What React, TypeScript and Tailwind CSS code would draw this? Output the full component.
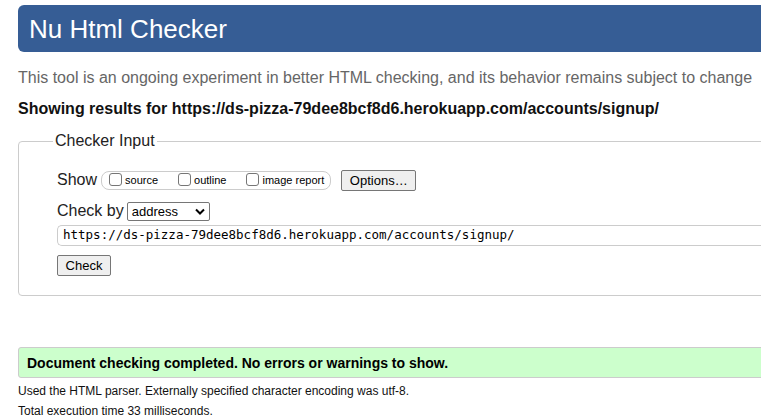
import React from 'react';

const sans = { fontFamily: '"Liberation Sans", Arial, sans-serif' };

export default function App() {
  return (
    <div className="w-[761px] h-[416px] overflow-hidden bg-white text-black" style={sans}>
      <div className="w-[820px] pl-[18px] pt-[5px]">
        <header className="h-[47px] bg-[#365d95] rounded-[6px] flex items-center pl-[11px]">
          <h1 className="text-[26px] leading-none text-white font-normal">Nu Html Checker</h1>
        </header>

        <p className="mt-[17px] text-[16px] leading-[18px] text-[#666666]">
          This tool is an ongoing experiment in better HTML checking, and its behavior remains subject to change
        </p>
        <p className="mt-[13px] text-[16px] leading-[18px] font-bold text-[#111111]">
          Showing results for https://ds-pizza-79dee8bcf8d6.herokuapp.com/accounts/signup/
        </p>

        <fieldset className="mt-[14px] border border-[#cccccc] rounded-[4px] h-[164px] pl-[38px] pr-0 m-0 min-w-0">
          <legend className="-ml-[4px] px-[2px] text-[16px] leading-[18px] text-[#222222]">Checker Input</legend>

          <div className="flex items-center mt-[19px] h-[22px]">
            <span className="text-[16px] leading-[18px] text-[#222222] mr-[4px]">Show</span>
            <div className="flex items-center h-[19px] border border-[#cccccc] rounded-[8px] pl-[7px] pr-[6px]">
              <label className="flex items-center text-[11px] leading-none mr-[20px]">
                <span className="w-[13px] h-[13px] border border-[#767676] rounded-[3px] bg-white mr-[3px] mb-[2px]" />
                source
              </label>
              <label className="flex items-center text-[11px] leading-none mr-[20px]">
                <span className="w-[13px] h-[13px] border border-[#767676] rounded-[3px] bg-white mr-[3px] mb-[2px]" />
                outline
              </label>
              <label className="flex items-center text-[11px] leading-none">
                <span className="w-[13px] h-[13px] border border-[#767676] rounded-[3px] bg-white mr-[3px] mb-[2px]" />
                image report
              </label>
            </div>
            <button className="ml-[10px] h-[21px] w-[75px] border border-[#767676] rounded-[2px] bg-[#efefef] text-[13px] leading-none">
              Options…
            </button>
          </div>

          <div className="flex items-center mt-[10px] h-[20px]">
            <span className="text-[16px] leading-[18px] text-[#222222] mr-[3px]">Check by</span>
            <div className="flex items-center justify-between w-[83px] h-[19px] border border-[#767676] rounded-[2px] bg-white pl-[4px] pr-[4px]">
              <span className="text-[13px] leading-none">address</span>
              <svg width="10" height="7" viewBox="0 0 10 7">
                <path d="M1 1.5 L5 5.5 L9 1.5" fill="none" stroke="#000" strokeWidth="2" />
              </svg>
            </div>
          </div>

          <div
            className="mt-[4px] h-[21px] border border-[#cccccc] rounded-l-[5px] border-r-0 flex items-center pl-[5px] leading-none"
            style={{ fontFamily: '"DejaVu Sans Mono", "Liberation Mono", monospace', fontSize: '12.5px' }}
          >
            https://ds-pizza-79dee8bcf8d6.herokuapp.com/accounts/signup/
          </div>

          <button className="mt-[9px] h-[21px] w-[54px] border border-[#767676] rounded-[2px] bg-[#efefef] text-[13px] leading-none block">
            Check
          </button>
        </fieldset>

        <div className="mt-[51px] h-[31px] bg-[#ccffcc] border border-[#cccccc] rounded-l-[3px] flex items-center pl-[8px]">
          <span className="text-[14px] font-bold leading-none text-black">
            Document checking completed. No errors or warnings to show.
          </span>
        </div>

        <p className="mt-[6px] text-[12px] leading-[14px] text-[#111111]">
          Used the HTML parser. Externally specified character encoding was utf-8.
        </p>
        <p className="mt-[6px] text-[12px] leading-[14px] text-[#111111]">Total execution time 33 milliseconds.</p>
      </div>
    </div>
  );
}
